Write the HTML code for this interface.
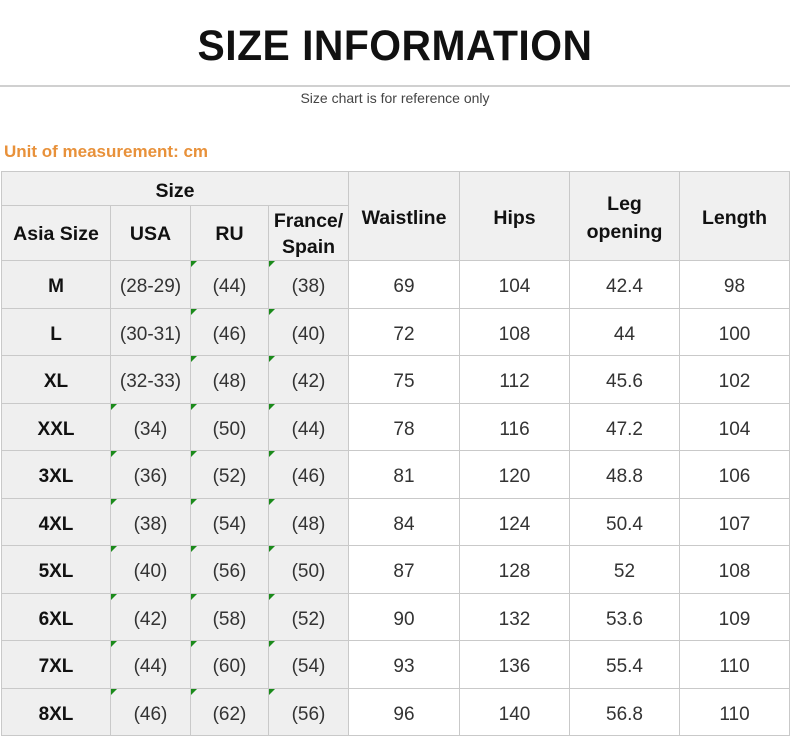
<!DOCTYPE html>
<html><head><meta charset="utf-8"><style>
body{margin:0;width:790px;height:736px;background:#fff;overflow:hidden;position:relative;font-family:"Liberation Sans",sans-serif}
.t{position:absolute;left:0;top:22px;width:790px;text-align:center;font-size:43px;font-weight:bold;color:#111;transform:scaleX(0.95);letter-spacing:0.5px}
.hr{position:absolute;left:0;top:85px;width:790px;height:2px;background:#d0d0d0}
.sub{position:absolute;left:0;top:90px;width:790px;text-align:center;font-size:14px;color:#444}
.unit{position:absolute;left:4px;top:142px;font-size:17px;font-weight:bold;color:#e8913a}
table{position:absolute;left:1px;top:171px;border-collapse:collapse;table-layout:fixed}
td{border:1px solid #c9c9c9;text-align:center;padding:4px 0 0 0;font-size:19px;color:#333;position:relative}
.h{background:#f0f0f0;font-weight:bold;color:#111;font-size:19.5px;line-height:28px}
.g{background:#efefef}
.b{font-weight:bold;color:#111}
tr.r td{height:40.5px;padding-top:6px}
.tri::before{content:"";position:absolute;left:0;top:0;border-top:6px solid #1a8a1a;border-right:6px solid transparent}
</style></head><body>
<div class="t">SIZE INFORMATION</div>
<div class="hr"></div>
<div class="sub">Size chart is for reference only</div>
<div class="unit">Unit of measurement: cm</div>
<table>
<colgroup><col style="width:109px"><col style="width:80px"><col style="width:78px"><col style="width:80px"><col style="width:111px"><col style="width:110px"><col style="width:110px"><col style="width:110px"></colgroup>
<tr><td class="h" colspan="4" style="height:29px">Size</td><td class="h" rowspan="2">Waistline</td><td class="h" rowspan="2">Hips</td><td class="h" rowspan="2">Leg<br>opening</td><td class="h" rowspan="2">Length</td></tr>
<tr><td class="h" style="height:48px;padding-top:2px">Asia Size</td><td class="h" style="padding-top:2px">USA</td><td class="h" style="padding-top:2px">RU</td><td class="h" style="padding-top:2px;line-height:26px">France/<br>Spain</td></tr>
<tr class="r"><td class="g b">M</td><td class="g">(28-29)</td><td class="g tri">(44)</td><td class="g tri">(38)</td><td>69</td><td>104</td><td>42.4</td><td>98</td></tr>
<tr class="r"><td class="g b">L</td><td class="g">(30-31)</td><td class="g tri">(46)</td><td class="g tri">(40)</td><td>72</td><td>108</td><td>44</td><td>100</td></tr>
<tr class="r"><td class="g b">XL</td><td class="g">(32-33)</td><td class="g tri">(48)</td><td class="g tri">(42)</td><td>75</td><td>112</td><td>45.6</td><td>102</td></tr>
<tr class="r"><td class="g b">XXL</td><td class="g tri">(34)</td><td class="g tri">(50)</td><td class="g tri">(44)</td><td>78</td><td>116</td><td>47.2</td><td>104</td></tr>
<tr class="r"><td class="g b">3XL</td><td class="g tri">(36)</td><td class="g tri">(52)</td><td class="g tri">(46)</td><td>81</td><td>120</td><td>48.8</td><td>106</td></tr>
<tr class="r"><td class="g b">4XL</td><td class="g tri">(38)</td><td class="g tri">(54)</td><td class="g tri">(48)</td><td>84</td><td>124</td><td>50.4</td><td>107</td></tr>
<tr class="r"><td class="g b">5XL</td><td class="g tri">(40)</td><td class="g tri">(56)</td><td class="g tri">(50)</td><td>87</td><td>128</td><td>52</td><td>108</td></tr>
<tr class="r"><td class="g b">6XL</td><td class="g tri">(42)</td><td class="g tri">(58)</td><td class="g tri">(52)</td><td>90</td><td>132</td><td>53.6</td><td>109</td></tr>
<tr class="r"><td class="g b">7XL</td><td class="g tri">(44)</td><td class="g tri">(60)</td><td class="g tri">(54)</td><td>93</td><td>136</td><td>55.4</td><td>110</td></tr>
<tr class="r"><td class="g b">8XL</td><td class="g tri">(46)</td><td class="g tri">(62)</td><td class="g tri">(56)</td><td>96</td><td>140</td><td>56.8</td><td>110</td></tr>
</table>
</body></html>
